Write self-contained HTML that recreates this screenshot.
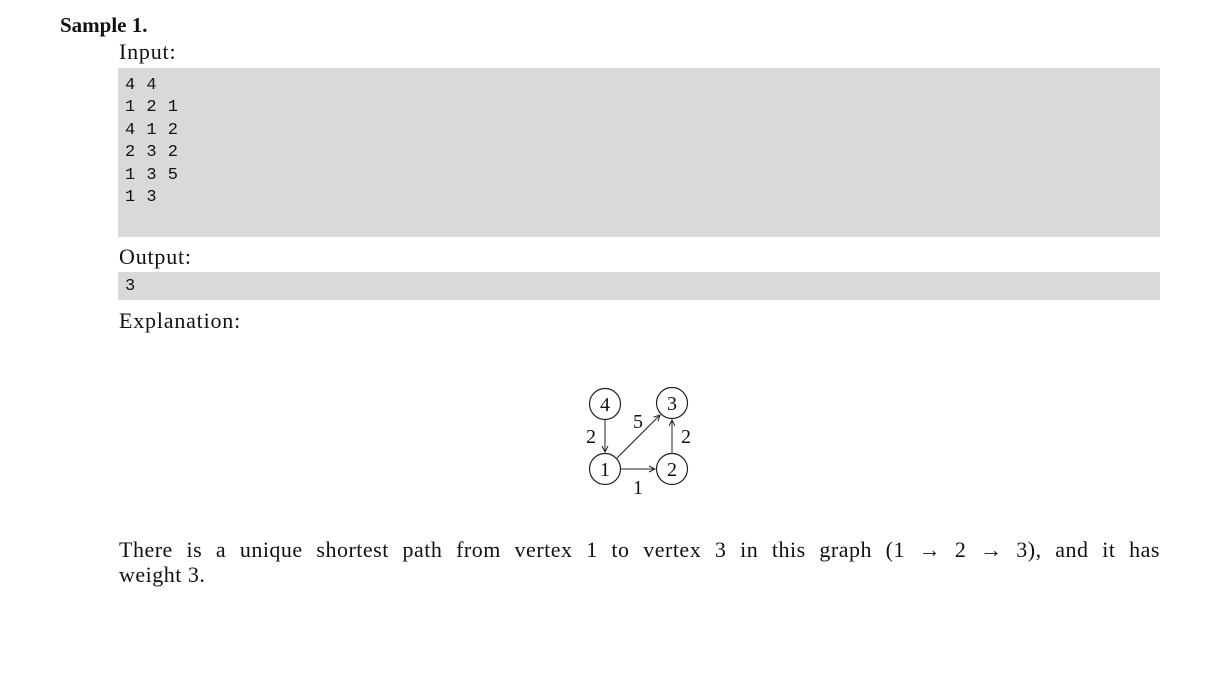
<!DOCTYPE html>
<html><head><style>
body{margin:0;width:1216px;height:682px;background:#fff;position:relative;font-family:"Liberation Serif",serif;color:#111;overflow:hidden}
.a{position:absolute;white-space:nowrap}
.l{font-size:22px;letter-spacing:0.8px}
.box{position:absolute;left:118px;width:1042px;background:#d9d9d9;box-sizing:border-box}
.m{font-family:"Liberation Mono",monospace;font-size:17px;line-height:22.4px;padding-left:7px;letter-spacing:0.5px}
</style></head><body>
<div class="a" style="left:60px;top:13px;font-size:21px;font-weight:bold">Sample 1.</div>
<div class="a l" style="left:119px;top:39px">Input:</div>
<div class="box m" style="top:68px;height:169px;padding-top:7px">4 4<br>1 2 1<br>4 1 2<br>2 3 2<br>1 3 5<br>1 3</div>
<div class="a l" style="left:119px;top:244px">Output:</div>
<div class="box m" style="top:272px;height:28px;padding-top:4px">3</div>
<div class="a l" style="left:119px;top:308px">Explanation:</div>
<svg class="a" style="left:0;top:0" width="1216" height="682">
<defs><marker id="ar" markerWidth="8" markerHeight="8" refX="7" refY="4" orient="auto" markerUnits="userSpaceOnUse"><path d="M1,1 L7,4 L1,7" fill="none" stroke="#222" stroke-width="1"/></marker></defs>
<g fill="none" stroke="#222" stroke-width="1.2">
<circle cx="605" cy="404" r="15.5"/><circle cx="672" cy="403" r="15.5"/>
<circle cx="605" cy="469" r="15.5"/><circle cx="672" cy="469" r="15.5"/>
</g>
<g stroke="#222" stroke-width="1" marker-end="url(#ar)">
<line x1="605" y1="420" x2="605" y2="452"/>
<line x1="621" y1="469" x2="655" y2="469"/>
<line x1="672" y1="453" x2="672" y2="420"/>
<line x1="617" y1="458" x2="660" y2="415"/>
</g>
<g font-size="20" text-anchor="middle" fill="#111">
<text x="605" y="411">4</text><text x="672" y="410">3</text>
<text x="605" y="476">1</text><text x="672" y="476">2</text>
<text x="591" y="443">2</text><text x="686" y="443">2</text>
<text x="638" y="428">5</text><text x="638" y="494">1</text>
</g>
</svg>
<div class="a l" style="left:119px;top:537px;line-height:25px;white-space:normal;width:1041px;text-align:justify;text-align-last:justify;letter-spacing:0.5px">There is a unique shortest path from vertex 1 to vertex 3 in this graph (1 &rarr; 2 &rarr; 3), and it has</div>
<div class="a l" style="left:119px;top:562px;line-height:25px;letter-spacing:0.5px">weight 3.</div>
</body></html>
